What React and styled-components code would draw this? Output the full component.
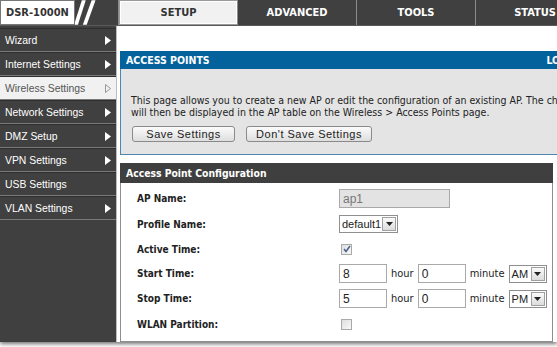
import styled, { createGlobalStyle } from 'styled-components';

const GlobalStyle = createGlobalStyle`
  body {
    margin: 0;
    background: #fff;
  }
`;

const menu = [
  { label: 'Wizard', arrow: true },
  { label: 'Internet Settings', arrow: true },
  { label: 'Wireless Settings', arrow: true, active: true },
  { label: 'Network Settings', arrow: true },
  { label: 'DMZ Setup', arrow: true },
  { label: 'VPN Settings', arrow: true },
  { label: 'USB Settings' },
  { label: 'VLAN Settings', arrow: true },
];

const tabs = ['SETUP', 'ADVANCED', 'TOOLS', 'STATUS'];

const Arrow = ({ open }) => (
  <svg width="6" height="9" viewBox="0 0 6 9">
    {open ? (
      <path d="M0.5 0.5 L5.5 4.5 L0.5 8.5 Z" fill="none" stroke="#999" strokeWidth="1" />
    ) : (
      <path d="M0 0 L6 4.5 L0 9 Z" fill="#fff" />
    )}
  </svg>
);

const Check = () => (
  <svg width="8" height="8" viewBox="0 0 8 8">
    <path d="M1 4 L3 6.5 L7 1" fill="none" stroke="#4a5d8a" strokeWidth="1.4" />
  </svg>
);

const Caret = () => (
  <svg width="7" height="4" viewBox="0 0 7 4">
    <path d="M0 0 L7 0 L3.5 4 Z" fill="#222" />
  </svg>
);

const Select = ({ value, width }) => (
  <SelectBox $width={width}>
    <span>{value}</span>
    <SelectButton>
      <Caret />
    </SelectButton>
  </SelectBox>
);

const Checkbox = ({ checked }) => <CheckBox>{checked && <Check />}</CheckBox>;

const App = () => {
  return (
    <Page>
      <GlobalStyle />
      <Frame>
        <TopBar>
          <Logo>DSR-1000N</Logo>
          <Slashes>
            <svg width="44" height="25" viewBox="0 0 44 25">
              <path d="M-1 25 L3 25 L11 0 L7 0 Z" fill="#fff" />
              <path d="M8 25 L12 25 L21 0 L17 0 Z" fill="#fff" />
            </svg>
          </Slashes>
          {tabs.map((t) => (
            <Tab key={t} $active={t === 'SETUP'}>
              {t}
            </Tab>
          ))}
        </TopBar>

        <Body>
          <Sidebar>
            {menu.map((m) => (
              <MenuItem key={m.label} $active={m.active}>
                <span>{m.label}</span>
                {m.arrow && <Arrow open={m.active} />}
              </MenuItem>
            ))}
          </Sidebar>

          <Main>
            <InfoPanel>
              <InfoHeader>
                <span>ACCESS POINTS</span>
                <span>LOGOUT</span>
              </InfoHeader>
              <InfoBody>
                <p>
                  This page allows you to create a new AP or edit the configuration of an existing AP. The
                  changes
                  <br />
                  will then be displayed in the AP table on the Wireless &gt; Access Points page.
                </p>
                <ButtonRow>
                  <Button $width={103}>Save Settings</Button>
                  <Button $width={126}>Don't Save Settings</Button>
                </ButtonRow>
              </InfoBody>
            </InfoPanel>

            <ConfigPanel>
              <ConfigHeader>Access Point Configuration</ConfigHeader>
              <ConfigBody>
                <Row $h={25}>
                  <Label>AP Name:</Label>
                  <TextInput $width={111} $disabled>ap1</TextInput>
                </Row>
                <Row $h={26}>
                  <Label>Profile Name:</Label>
                  <Select value="default1" width={59} />
                </Row>
                <Row $h={24}>
                  <Label>Active Time:</Label>
                  <Checkbox checked />
                </Row>
                <Row $h={25}>
                  <Label>Start Time:</Label>
                  <Controls>
                    <TextInput $width={48}>8</TextInput>
                    <Unit>hour</Unit>
                    <TextInput $width={48}>0</TextInput>
                    <Unit>minute</Unit>
                    <Select value="AM" width={38} />
                  </Controls>
                </Row>
                <Row $h={25}>
                  <Label>Stop Time:</Label>
                  <Controls>
                    <TextInput $width={48}>5</TextInput>
                    <Unit>hour</Unit>
                    <TextInput $width={48}>0</TextInput>
                    <Unit>minute</Unit>
                    <Select value="PM" width={38} />
                  </Controls>
                </Row>
                <Row $h={27}>
                  <Label>WLAN Partition:</Label>
                  <Checkbox />
                </Row>
              </ConfigBody>
            </ConfigPanel>
          </Main>
        </Body>
      </Frame>
    </Page>
  );
};

const tahoma = `"DejaVu Sans Condensed", "Liberation Sans", Arial, sans-serif`;
const arial = `"Liberation Sans", Arial, sans-serif`;

const Page = styled.div`
  width: 557px;
  height: 347px;
  overflow: hidden;
  background: #fff;
`;

const Frame = styled.div`
  width: 557px;
  height: 342px;
  display: flex;
  flex-direction: column;
  box-shadow: 0 2px 4px rgba(0, 0, 0, 0.55);
  overflow: hidden;
`;

const TopBar = styled.div`
  height: 26px;
  flex: none;
  display: flex;
  background: #404040;
  border-bottom: 1px solid #5a5a5a;
  box-sizing: border-box;
`;

const Logo = styled.div`
  width: 75px;
  flex: none;
  height: 25px;
  box-sizing: border-box;
  background: #fff;
  border: 1px solid #777;
  display: flex;
  align-items: center;
  padding-left: 5px;
  white-space: nowrap;
  font: bold 11px ${tahoma};
  color: #333;
`;

const Slashes = styled.div`
  width: 44px;
  flex: none;
  height: 25px;
  display: flex;
  align-items: center;
  border-right: 1px solid #8c8c8c;
  box-sizing: border-box;
`;

const Tab = styled.div`
  width: 119px;
  flex: none;
  height: 25px;
  box-sizing: border-box;
  display: flex;
  align-items: center;
  justify-content: center;
  font: bold 11px ${tahoma};
  color: ${(p) => (p.$active ? '#333' : '#fff')};
  background: ${(p) => (p.$active ? '#f1f1f1' : '#404040')};
  border: ${(p) => (p.$active ? '1px solid #9a9a9a' : 'none')};
  border-right: 1px solid #8c8c8c;
  box-shadow: ${(p) => (p.$active ? 'inset 0 0 0 1px #fff' : 'none')};
`;

const Body = styled.div`
  flex: 1;
  display: flex;
  min-height: 0;
`;

const Sidebar = styled.div`
  width: 117px;
  flex: none;
  box-sizing: border-box;
  background: #404040;
  border-right: 1px solid #bdbdbd;
  padding-top: 2px;
  display: flex;
  flex-direction: column;
`;

const MenuItem = styled.div`
  height: 24px;
  box-sizing: border-box;
  display: flex;
  align-items: center;
  justify-content: space-between;
  padding: 0 5px 0 5px;
  border-bottom: 1px solid #7a7a7a;
  border-top: 1px solid #2e2e2e;
  font: 10.4px ${arial};
  white-space: nowrap;
  color: ${(p) => (p.$active ? '#555' : '#fff')};
  background: ${(p) => (p.$active ? '#f1f1f1' : '#404040')};
`;

const Main = styled.div`
  flex: 1;
  min-width: 0;
  background: #fff;
  padding: 25px 0 0 3px;
  display: flex;
  flex-direction: column;
  gap: 8px;
`;

const InfoPanel = styled.div`
  width: 470px;
  flex: none;
`;

const InfoHeader = styled.div`
  height: 18px;
  box-sizing: border-box;
  background: #03629c;
  color: #fff;
  font: bold 10.5px ${tahoma};
  display: flex;
  align-items: center;
  justify-content: space-between;
  padding-left: 6px;
  white-space: nowrap;
`;

const InfoBody = styled.div`
  height: 86px;
  box-sizing: border-box;
  background: #e4e4e4;
  border: 1px solid #4e86b0;
  border-top: none;
  padding: 25px 0 0 10px;

  p {
    margin: 0;
    font: 10.5px ${tahoma};
    line-height: 12px;
    color: #222;
    white-space: nowrap;
  }
`;

const ButtonRow = styled.div`
  display: flex;
  gap: 11px;
  margin-top: 8px;
  padding-left: 1px;
`;

const Button = styled.div`
  width: ${(p) => p.$width}px;
  height: 16px;
  box-sizing: border-box;
  border: 1px solid #8a8a8a;
  border-radius: 3px;
  background: linear-gradient(#fbfbfb, #dedede);
  font: 11px ${arial};
  letter-spacing: 0.5px;
  white-space: nowrap;
  color: #222;
  display: flex;
  align-items: center;
  justify-content: center;
`;

const ConfigPanel = styled.div`
  width: 433px;
  flex: 1;
  display: flex;
  flex-direction: column;
`;

const ConfigHeader = styled.div`
  height: 20px;
  flex: none;
  background: #3f3f3f;
  color: #fff;
  font: bold 10.3px ${tahoma};
  display: flex;
  align-items: center;
  padding-left: 6px;
`;

const ConfigBody = styled.div`
  flex: 1;
  border: 1px solid #8e8e8e;
  border-top: none;
  padding: 3px 0 0 16px;
`;

const Row = styled.div`
  height: ${(p) => p.$h}px;
  display: flex;
  align-items: center;
`;

const Label = styled.div`
  width: 202px;
  flex: none;
  font: bold 10px ${tahoma};
  color: #222;
`;

const Controls = styled.div`
  display: flex;
  align-items: center;
`;

const TextInput = styled.div`
  width: ${(p) => p.$width}px;
  height: 19px;
  box-sizing: border-box;
  border: 1px solid #a9a9a9;
  background: ${(p) => (p.$disabled ? '#e3e3e3' : '#fff')};
  color: ${(p) => (p.$disabled ? '#777' : '#222')};
  font: 12px ${arial};
  display: flex;
  align-items: center;
  padding-left: 3px;
`;

const Unit = styled.span`
  font: 11px ${tahoma};
  color: #222;
  margin: 0 4px;
`;

const SelectBox = styled.div`
  width: ${(p) => p.$width}px;
  height: 18px;
  box-sizing: border-box;
  border: 1px solid #8f8f8f;
  background: #fff;
  display: flex;
  align-items: center;
  justify-content: space-between;
  padding: 0 1px 0 2px;
  font: 11px ${arial};
  white-space: nowrap;
  color: #222;
`;

const SelectButton = styled.div`
  width: 14px;
  height: 14px;
  flex: none;
  box-sizing: border-box;
  border: 1px solid #a0a0a0;
  background: linear-gradient(#fafafa, #dcdcdc);
  display: flex;
  align-items: center;
  justify-content: center;
`;

const CheckBox = styled.div`
  width: 11px;
  height: 11px;
  box-sizing: border-box;
  border: 1px solid #a9a9a9;
  background: linear-gradient(135deg, #dedede, #f8f8f8);
  display: flex;
  align-items: center;
  justify-content: center;
  margin-left: 2px;
`;

export default App;
